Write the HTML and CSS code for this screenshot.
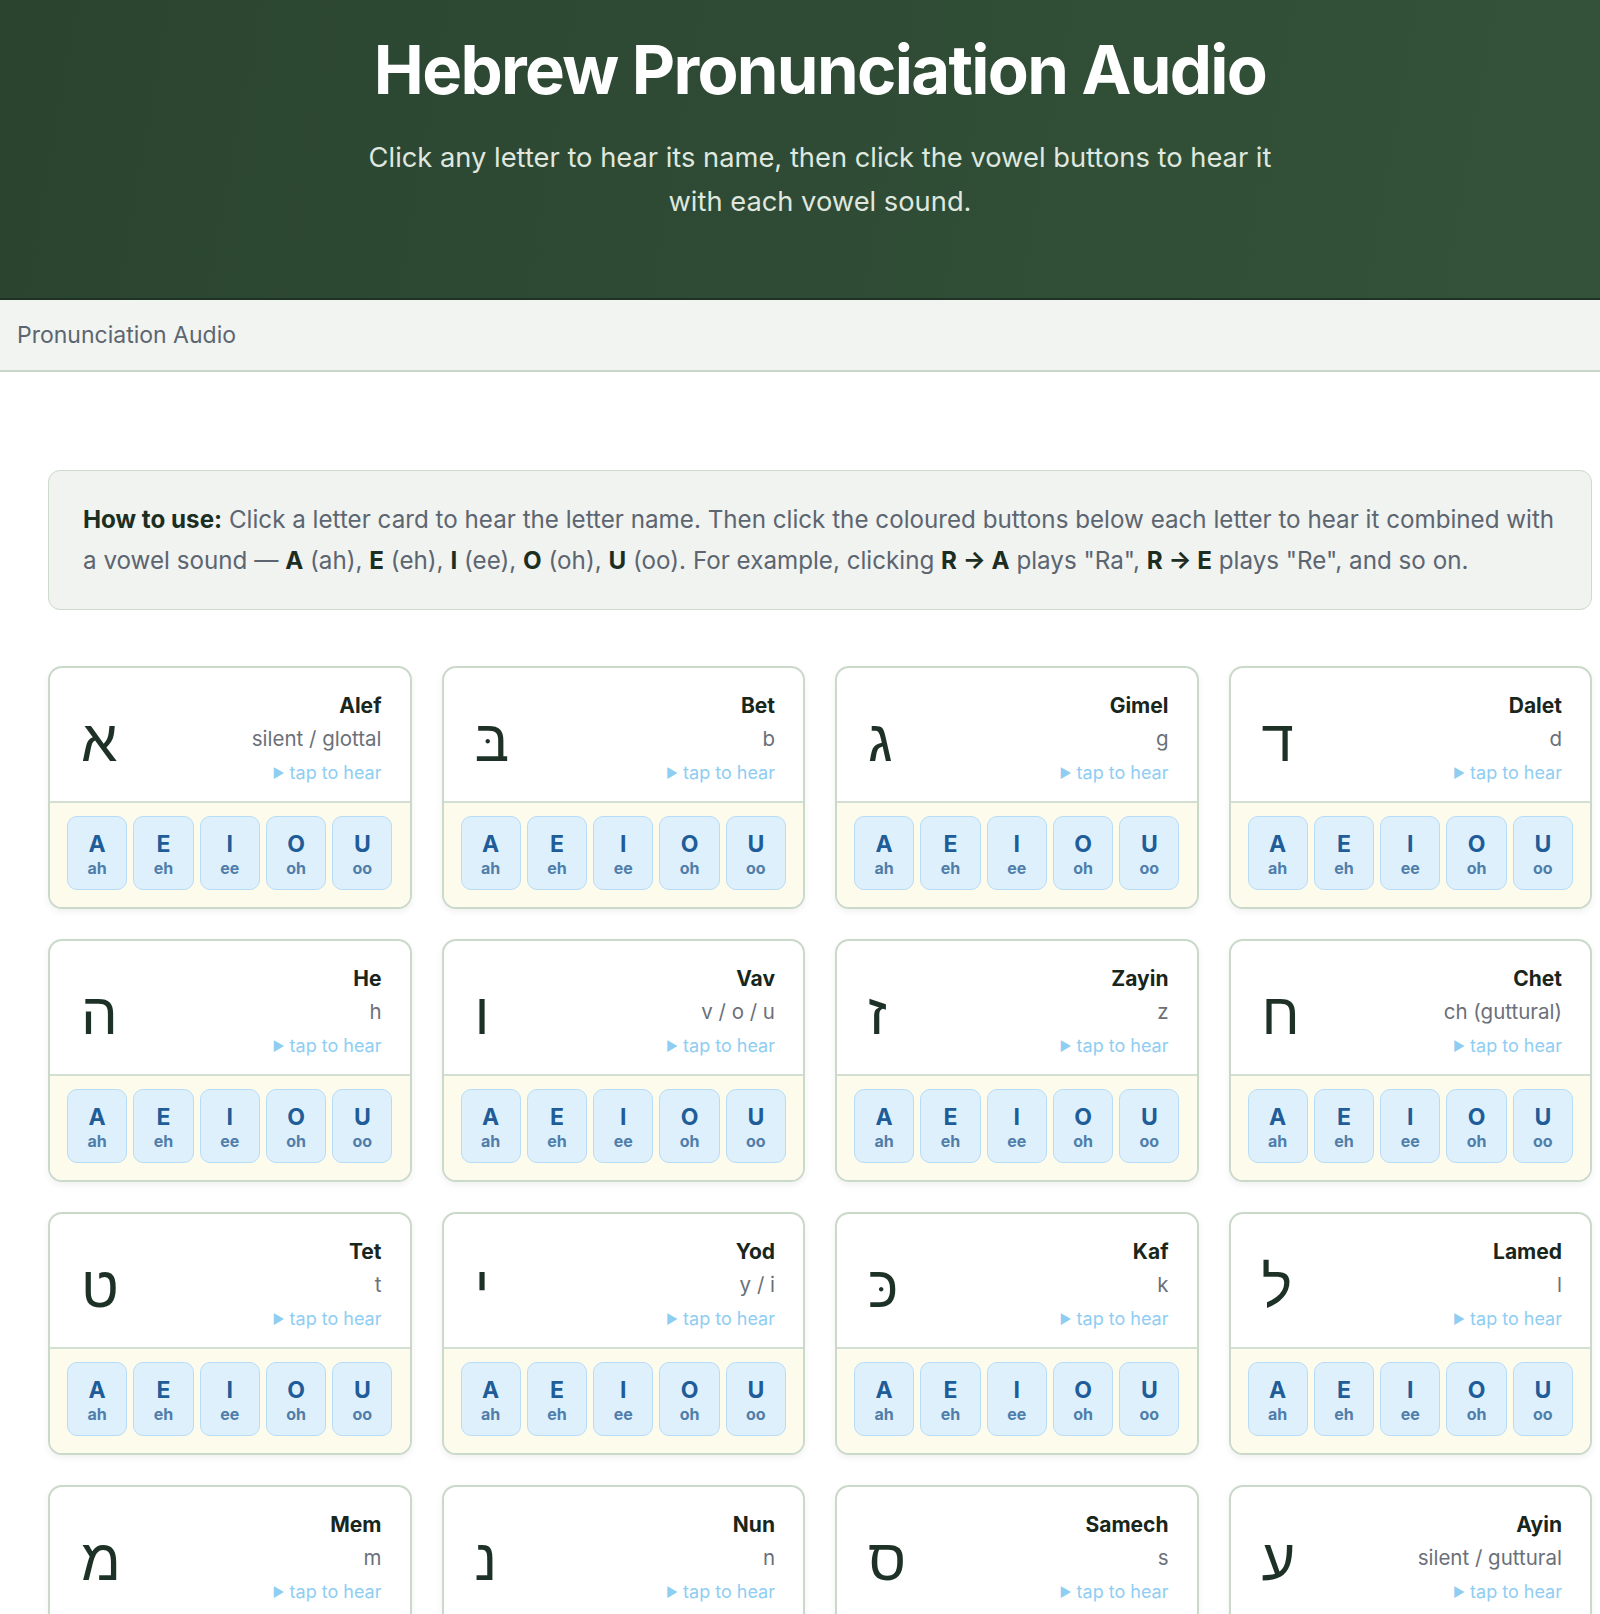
FILE: index.html
```html
<!DOCTYPE html>
<html lang="en">
<head>
<meta charset="utf-8">
<title>Hebrew Pronunciation Audio</title>
<link rel="stylesheet" href="styles.css">
</head>
<body>
<div class="page">
  <header class="hero">
    <h1 class="hero-title">Hebrew Pronunciation Audio</h1>
    <p class="hero-sub">Click any letter to hear its name, then click the vowel buttons to hear it with each vowel sound.</p>
  </header>
  <nav class="crumb">Pronunciation Audio</nav>
  <main class="main">
    <div class="howto">
      <b>How to use:</b> Click a letter card to hear the letter name. Then click the coloured buttons below each letter to hear it combined with a vowel sound — <b>A</b> (ah), <b>E</b> (eh), <b>I</b> (ee), <b>O</b> (oh), <b>U</b> (oo). For example, clicking <b>R → A</b> plays "Ra", <b>R → E</b> plays "Re", and so on.
    </div>
    <div class="grid" id="grid"></div>
  </main>
</div>
<script src="app.js"></script>
</body>
</html>
```
FILE: app.js
```js
var letters = [
  ["א","Alef","silent / glottal"],
  ["בּ","Bet","b"],
  ["ג","Gimel","g"],
  ["ד","Dalet","d"],
  ["ה","He","h"],
  ["ו","Vav","v / o / u"],
  ["ז","Zayin","z"],
  ["ח","Chet","ch (guttural)"],
  ["ט","Tet","t"],
  ["י","Yod","y / i"],
  ["כּ","Kaf","k"],
  ["ל","Lamed","l"],
  ["מ","Mem","m"],
  ["נ","Nun","n"],
  ["ס","Samech","s"],
  ["ע","Ayin","silent / guttural"],
  ["פּ","Pe","p"],
  ["צ","Tsadi","ts"],
  ["ק","Qof","q / k"],
  ["ר","Resh","r"],
  ["שׁ","Shin","sh"],
  ["ת","Tav","t"]
];
var vowels = [["A","ah"],["E","eh"],["I","ee"],["O","oh"],["U","oo"]];
var grid = document.getElementById("grid");
var html = "";
letters.forEach(function (l) {
  html += '<div class="card"><div class="card-top">' +
    '<div class="heb" dir="rtl">' + l[0] + '</div>' +
    '<div class="info"><div class="name">' + l[1] + '</div>' +
    '<div class="sound">' + l[2] + '</div>' +
    '<div class="tap"><span class="tri">&#9654;</span> tap to hear</div></div></div>' +
    '<div class="vowels">';
  vowels.forEach(function (v) {
    html += '<button class="vbtn"><span class="vl">' + v[0] + '</span><span class="vs">' + v[1] + '</span></button>';
  });
  html += '</div></div>';
});
grid.innerHTML = html;
```
FILE: styles.css
```css
* { box-sizing: border-box; }
html, body { margin: 0; padding: 0; background: #ffffff; }
body {
  font-family: Inter, "Liberation Sans", sans-serif;
  color: #1d2b21;
}
.page { width: 1640px; }

.hero {
  background: linear-gradient(100deg, #2a4430 0%, #2f4b35 50%, #34533a 100%);
  padding: 32px 20px 74px;
  border-bottom: 2px solid #1e3324;
  text-align: center;
}
.hero-title {
  margin: 0;
  font-size: 67px;
  line-height: 75px;
  font-weight: 700;
  letter-spacing: -0.025em;
  color: #ffffff;
}
.hero-sub {
  margin: 29px auto 0;
  max-width: 940px;
  font-size: 27.3px;
  line-height: 44px;
  color: #dfe7df;
}

.crumb {
  background: #f1f4f1;
  border-bottom: 2px solid #cad6ca;
  padding: 0 17px;
  line-height: 70px;
  font-size: 23px;
  color: #5d6670;
}

.main { padding: 98px 48px 60px; }

.howto {
  background: #f0f3f0;
  border: 1.5px solid #cddacd;
  border-radius: 12px;
  padding: 28px 34px;
  font-size: 24.2px;
  line-height: 41px;
  color: #5c6570;
}
.howto b { color: #1c2e21; font-weight: 700; }

.grid {
  margin-top: 56px;
  display: grid;
  grid-template-columns: repeat(4, 1fr);
  gap: 30px 30px;
}

.card {
  border: 2px solid #cad9ca;
  border-radius: 14px;
  background: #ffffff;
  overflow: hidden;
  box-shadow: 0 3px 6px rgba(30, 50, 30, 0.07);
}
.card-top {
  display: flex;
  align-items: center;
  justify-content: space-between;
  padding: 22px 28px 10px 31px;
  border-bottom: 2px solid #d3dfd3;
}
.heb {
  font-family: "Liberation Sans", "DejaVu Sans", sans-serif;
  font-size: 58px;
  line-height: 1;
  color: #1e3126;
}
.info { text-align: right; }
.name { font-size: 21px; line-height: 32px; font-weight: 700; color: #18261c; }
.sound { font-size: 20.5px; line-height: 34px; color: #6b7079; }
.tap { font-size: 18px; line-height: 34px; color: #8fcdf2; }
.tri { font-size: 13px; position: relative; top: -1px; }

.vowels {
  background: #fdfbec;
  padding: 13px 17px 17px;
  display: grid;
  grid-template-columns: repeat(5, 1fr);
  gap: 6px;
}
.vbtn {
  font-family: Inter, "Liberation Sans", sans-serif;
  background: #dff0fd;
  border: 1.5px solid #b7dcf7;
  border-radius: 10px;
  height: 74px;
  padding: 12.5px 0 0;
  display: flex;
  flex-direction: column;
  align-items: center;
  justify-content: flex-start;
  cursor: pointer;
}
.vl { font-size: 23px; line-height: 28px; font-weight: 700; color: #205d98; }
.vs { font-size: 16px; line-height: 22px; font-weight: 700; color: #4f7eaa; margin-top: -1px; }
```
